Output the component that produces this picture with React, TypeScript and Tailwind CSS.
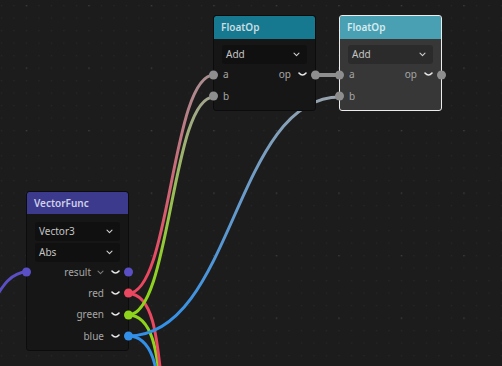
import React from "react";

type Sock = { label: string; color: string; chevron?: boolean };

// bezier from output socket to input socket, horizontal tangents
function wire(x1: number, y1: number, x2: number, y2: number, min = 30) {
    const d = Math.max(Math.abs(x2 - x1) * 0.5, min);
    return `M${x1} ${y1} C${x1 + d} ${y1} ${x2 - d} ${y2} ${x2} ${y2}`;
}

const RED = "#ea4760";
const GREEN = "#8fd41c";
const BLUE = "#3390e8";
const PURPLE = "#5a4fc4";
const GRAY = "#8e8e8e";

function Smile() {
    return (
        <svg width="9" height="5" viewBox="0 0 9 5" className="shrink-0">
            <path d="M1 1 Q4.5 5 8 1" fill="none" stroke="#e6e6e6" strokeWidth="1.6" strokeLinecap="round" />
        </svg>
    );
}

function Chevron({ color = "#b0b0b0" }: { color?: string }) {
    return (
        <svg width="7" height="5" viewBox="0 0 7 5" className="shrink-0">
            <path d="M1 1.2 L3.5 3.6 L6 1.2" fill="none" stroke={color} strokeWidth="1.1" strokeLinecap="round" strokeLinejoin="round" />
        </svg>
    );
}

function Dot({ color, side }: { color: string; side: "left" | "right" }) {
    return (
        <span
            className={`absolute top-1/2 -translate-y-1/2 w-[9px] h-[9px] rounded-full ${side === "left" ? "-left-[5px]" : "-right-[5px]"}`}
            style={{ background: color }}
        />
    );
}

function Select({ value, light }: { value: string; light?: boolean }) {
    return (
        <div
            className={`mx-[8px] h-[19px] rounded-[3px] flex items-center justify-between pl-[4px] pr-[7px] text-[10px] text-[#c4c4c4] ${light ? "bg-[#2b2b2b]" : "bg-[#101010]"}`}
        >
            <span>{value}</span>
            <Chevron color="#cfcfcf" />
        </div>
    );
}

function Row({ left, right, h = "h-[21.5px]" }: { left?: Sock; right?: Sock; h?: string }) {
    return (
        <div className={`relative flex items-center ${h} text-[10px] text-[#a6a6a6]`}>
            {left && (
                <>
                    <Dot color={left.color} side="left" />
                    <span className="pl-[9px]">{left.label}</span>
                </>
            )}
            {right && (
                <>
                    <div className="ml-auto flex items-center pr-[8px]">
                        <span>{right.label}</span>
                        {right.chevron && (
                            <span className="ml-[6px]">
                                <Chevron color="#7c7c7c" />
                            </span>
                        )}
                        <span className="ml-[7px]">
                            <Smile />
                        </span>
                    </div>
                    <Dot color={right.color} side="right" />
                </>
            )}
        </div>
    );
}

function Node({
    x,
    title,
    header,
    selected,
    children,
}: {
    x: string;
    title: string;
    header: string;
    selected?: boolean;
    children: React.ReactNode;
}) {
    return (
        <div
            className={`absolute ${x} w-[101px] rounded-[2px] ${selected ? "bg-[#373737] outline outline-[1.5px] outline-[#ececec]" : "bg-[#161616] outline outline-1 outline-[#0c0c0c]"}`}
        >
            <div className={`flex items-center px-[7px] rounded-t-[2px] text-[10px] font-semibold ${header}`}>{title}</div>
            {children}
        </div>
    );
}

export default function App() {
    return (
        <div className="relative w-[502px] h-[366px] overflow-hidden bg-[#1c1c1c] font-['Noto_Sans',sans-serif]">
            {/* grid + wires */}
            <svg className="absolute inset-0" width="502" height="366">
                <defs>
                    <pattern id="minor" x="0.8" y="5" width="12.5" height="12.5" patternUnits="userSpaceOnUse">
                        <rect x="0" y="0" width="1.2" height="1.2" fill="#272727" />
                    </pattern>
                    <pattern id="major" x="25.8" y="5" width="62.5" height="62.5" patternUnits="userSpaceOnUse">
                        <rect x="0" y="0" width="1.3" height="1.3" fill="#3c3c3c" />
                    </pattern>
                    <linearGradient id="wg-r" gradientUnits="userSpaceOnUse" x1="0" y1="293" x2="0" y2="75">
                        <stop offset="0.1" stopColor={RED} />
                        <stop offset="1" stopColor="#a98e90" />
                    </linearGradient>
                    <linearGradient id="wg-g" gradientUnits="userSpaceOnUse" x1="0" y1="315" x2="0" y2="97">
                        <stop offset="0.1" stopColor={GREEN} />
                        <stop offset="1" stopColor="#a2a68e" />
                    </linearGradient>
                    <linearGradient id="wg-b" gradientUnits="userSpaceOnUse" x1="128" y1="336" x2="340" y2="97">
                        <stop offset="0.1" stopColor={BLUE} />
                        <stop offset="1" stopColor="#9aa4ac" />
                    </linearGradient>
                </defs>
                <rect width="502" height="366" fill="url(#minor)" />
                <rect width="502" height="366" fill="url(#major)" />

                {/* wires leaving the canvas downwards */}
                <path d={wire(128, 336, 195, 470, 50)} fill="none" stroke={BLUE} strokeWidth="3" />
                <path d={wire(128, 315, 195, 470, 50)} fill="none" stroke={GREEN} strokeWidth="3" />
                <path d={wire(128, 293.5, 195, 470, 50)} fill="none" stroke={RED} strokeWidth="3" />

                <path d="M-40 330 C-8 330 -5 272 27 272" fill="none" stroke={PURPLE} strokeWidth="3" />
                <path d={wire(128, 336, 340, 97)} fill="none" stroke="url(#wg-b)" strokeWidth="3" />
                <path d={wire(128, 315, 214, 97)} fill="none" stroke="url(#wg-g)" strokeWidth="3" />
                <path d={wire(128, 293.5, 214, 75)} fill="none" stroke="url(#wg-r)" strokeWidth="3" />
                <path d="M315 75 L340 75" fill="none" stroke={GRAY} strokeWidth="4" />
            </svg>

            <Node x="left-[214px] top-[16px]" title="FloatOp" header="h-[23px] bg-[#17798f] text-[#c9dde2]">
                <div className="pt-[6px] pb-[2.5px]">
                    <Select value="Add" />
                    <Row left={{ label: "a", color: GRAY }} right={{ label: "op", color: GRAY }} />
                    <Row left={{ label: "b", color: GRAY }} />
                </div>
            </Node>

            <Node x="left-[340px] top-[16px]" title="FloatOp" header="h-[23px] bg-[#4aa0b3] text-[#d6ebf0]" selected>
                <div className="pt-[6px] pb-[2.5px]">
                    <Select value="Add" light />
                    <Row left={{ label: "a", color: GRAY }} right={{ label: "op", color: GRAY }} />
                    <Row left={{ label: "b", color: GRAY }} />
                </div>
            </Node>

            <Node x="left-[27px] top-[192px]" title="VectorFunc" header="h-[22px] bg-[#3b3a8d] text-[#cfcfe8]">
                <div className="pt-[7.5px] flex flex-col gap-[2px]">
                    <Select value="Vector3" />
                    <Select value="Abs" />
                </div>
                <div className="pb-[3px]">
                    <Row h="h-[21.3px]" left={{ label: "", color: PURPLE }} right={{ label: "result", color: PURPLE, chevron: true }} />
                    <Row h="h-[21.3px]" right={{ label: "red", color: RED }} />
                    <Row h="h-[21.3px]" right={{ label: "green", color: GREEN }} />
                    <Row h="h-[21.3px]" right={{ label: "blue", color: BLUE }} />
                </div>
            </Node>
        </div>
    );
}
